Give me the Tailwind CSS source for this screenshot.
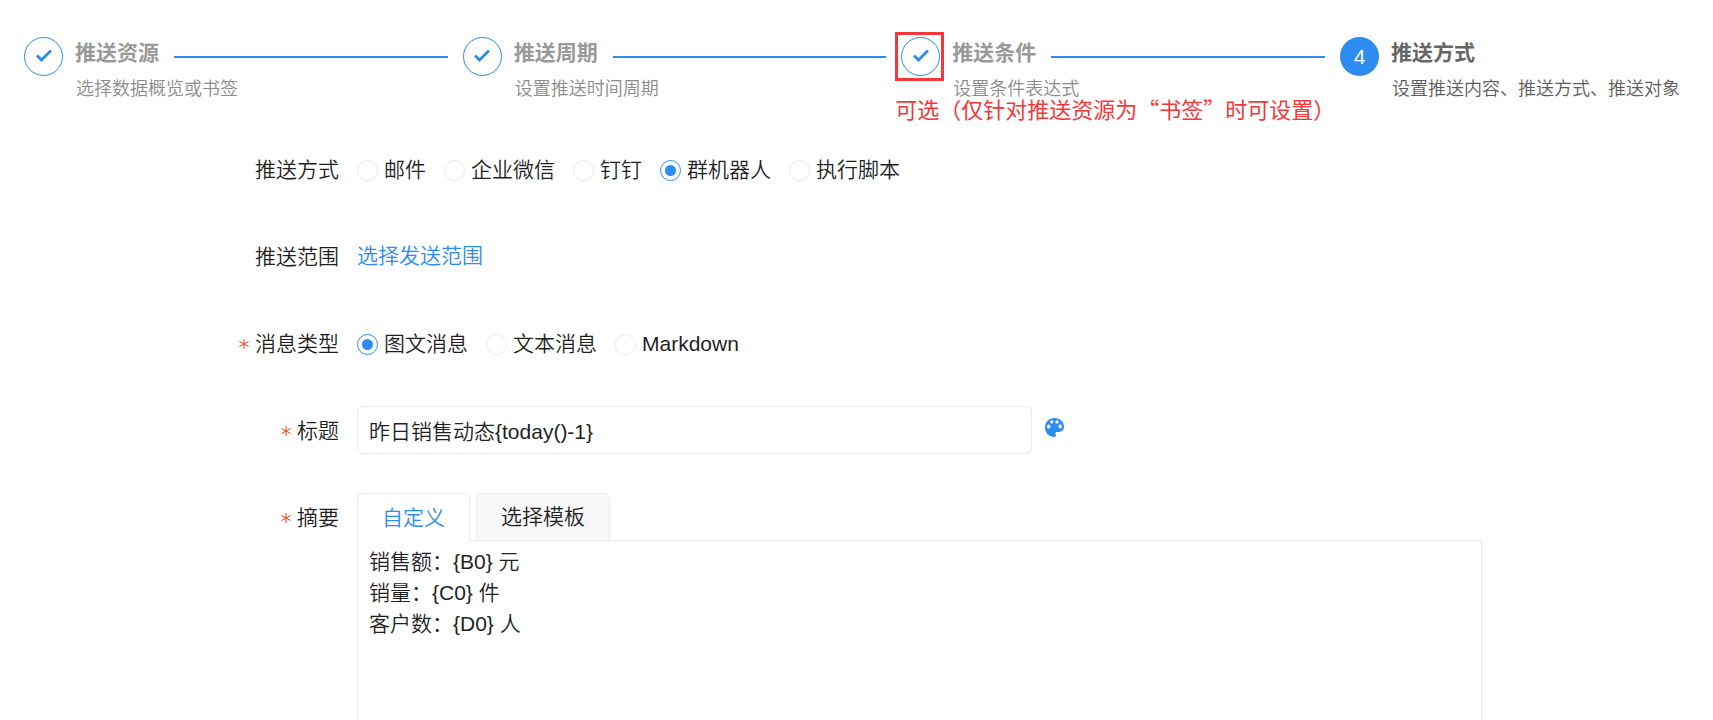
<!DOCTYPE html>
<html lang="zh-CN">
<head>
  <meta charset="UTF-8">
  <meta name="viewport" content="width=device-width, initial-scale=1.0">
  <title>推送方式</title>
  <script src="https://cdn.jsdelivr.net/npm/@tailwindcss/browser@4"></script>
</head>
<body class="flex h-screen flex-col overflow-hidden bg-white font-['Liberation_Sans','Noto_Sans_CJK_SC',sans-serif] text-[21px] font-[350] text-[#1f1f1f]">

  <!-- Steps -->
  <ol class="grid grid-cols-[1fr_1fr_1fr_373px] pl-6 pt-[37px]">
    <li class="flex gap-3">
      <span class="flex size-[39px] shrink-0 items-center justify-center rounded-full border border-[#2d8cf0]">
        <svg class="size-4" viewBox="0 0 16 16" fill="none" stroke="#2d8cf0" stroke-width="2.8"><path d="M1 6.500 5.500 11 15 1.500"/></svg>
      </span>
      <div class="min-w-0 flex-1">
        <div class="flex gap-[15px] pr-[15px]">
          <h2 class="font-bold leading-8 text-[#999]">推送资源</h2>
          <span class="mt-[19px] h-0.5 flex-1 bg-[#2d8cf0]"></span>
        </div>
        <p class="pl-px pt-1.5 text-lg leading-7 text-[#8c8c8c]">选择数据概览或书签</p>
      </div>
    </li>
    <li class="flex gap-3">
      <span class="flex size-[39px] shrink-0 items-center justify-center rounded-full border border-[#2d8cf0]">
        <svg class="size-4" viewBox="0 0 16 16" fill="none" stroke="#2d8cf0" stroke-width="2.8"><path d="M1 6.500 5.500 11 15 1.500"/></svg>
      </span>
      <div class="min-w-0 flex-1">
        <div class="flex gap-[15px] pr-[15px]">
          <h2 class="font-bold leading-8 text-[#999]">推送周期</h2>
          <span class="mt-[19px] h-0.5 flex-1 bg-[#2d8cf0]"></span>
        </div>
        <p class="pl-px pt-1.5 text-lg leading-7 text-[#8c8c8c]">设置推送时间周期</p>
      </div>
    </li>
    <li class="relative flex gap-3">
      <span class="flex size-[39px] shrink-0 items-center justify-center rounded-full border border-[#2d8cf0]">
        <svg class="size-4" viewBox="0 0 16 16" fill="none" stroke="#2d8cf0" stroke-width="2.8"><path d="M1 6.500 5.500 11 15 1.500"/></svg>
      </span>
      <div class="min-w-0 flex-1">
        <div class="flex gap-[15px] pr-[15px]">
          <h2 class="font-bold leading-8 text-[#999]">推送条件</h2>
          <span class="mt-[19px] h-0.5 flex-1 bg-[#2d8cf0]"></span>
        </div>
        <p class="pl-px pt-1.5 text-lg leading-7 text-[#8c8c8c]">设置条件表达式</p>
      </div>
      <!-- Annotation -->
      <span class="absolute -left-1.5 -top-[5px] size-[49px] border-3 border-[#f5373a]"></span>
      <strong class="absolute -left-1.5 top-14 whitespace-nowrap font-['Noto_Sans_CJK_SC',sans-serif] text-[22px] font-normal leading-[30px] text-[#f5373a]">可选（仅针对推送资源为“书签”时可设置）</strong>
    </li>
    <li class="flex gap-3">
      <span class="flex size-[39px] shrink-0 items-center justify-center rounded-full bg-[#2d8cf0] text-white">4</span>
      <div class="min-w-0 flex-1">
        <h2 class="font-bold leading-8 text-[#666]">推送方式</h2>
        <p class="whitespace-nowrap pl-px pt-1.5 text-lg leading-7 text-[#5c5c5c]">设置推送内容、推送方式、推送对象</p>
      </div>
    </li>
  </ol>

  <!-- Push form -->
  <form class="mt-[42px] grid min-h-0 flex-1 grid-cols-[339px_1fr] grid-rows-[48px_48px_48px_48px_1fr] gap-x-[18px] gap-y-[39px] overflow-hidden pr-[231px] leading-8">
    <div class="flex h-12 items-center justify-end pt-0.5" id="way-label">推送方式</div>
    <div class="flex items-center gap-[18px] pt-0.5" role="radiogroup" aria-labelledby="way-label">
      <label class="flex items-center gap-1.5"><input type="radio" name="way" class="size-[21px] appearance-none rounded-full border border-[#e8eaec] p-1 checked:border-[#2d8cf0] checked:bg-[#2d8cf0] checked:bg-clip-content">邮件</label>
      <label class="flex items-center gap-1.5"><input type="radio" name="way" class="size-[21px] appearance-none rounded-full border border-[#e8eaec] p-1 checked:border-[#2d8cf0] checked:bg-[#2d8cf0] checked:bg-clip-content">企业微信</label>
      <label class="flex items-center gap-1.5"><input type="radio" name="way" class="size-[21px] appearance-none rounded-full border border-[#e8eaec] p-1 checked:border-[#2d8cf0] checked:bg-[#2d8cf0] checked:bg-clip-content">钉钉</label>
      <label class="flex items-center gap-1.5"><input type="radio" name="way" checked class="size-[21px] appearance-none rounded-full border border-[#e8eaec] p-1 checked:border-[#2d8cf0] checked:bg-[#2d8cf0] checked:bg-clip-content">群机器人</label>
      <label class="flex items-center gap-1.5"><input type="radio" name="way" class="size-[21px] appearance-none rounded-full border border-[#e8eaec] p-1 checked:border-[#2d8cf0] checked:bg-[#2d8cf0] checked:bg-clip-content">执行脚本</label>
    </div>

    <div class="flex h-12 items-center justify-end pt-0.5">推送范围</div>
    <div class="flex items-center"><a href="#" class="text-[#2d8cf0]">选择发送范围</a></div>

    <div class="flex h-12 items-center justify-end gap-1.5 pt-0.5" id="type-label">
      <svg class="size-2.5" viewBox="0 0 10 10" stroke="#ed4014" stroke-width="1"><path d="M5 0V10M.5 2.5 9.5 7.5M9.5 2.5 .5 7.5"/></svg>消息类型
    </div>
    <div class="flex items-center gap-[18px] pt-0.5" role="radiogroup" aria-labelledby="type-label">
      <label class="flex items-center gap-1.5"><input type="radio" name="type" checked class="size-[21px] appearance-none rounded-full border border-[#e8eaec] p-1 checked:border-[#2d8cf0] checked:bg-[#2d8cf0] checked:bg-clip-content">图文消息</label>
      <label class="flex items-center gap-1.5"><input type="radio" name="type" class="size-[21px] appearance-none rounded-full border border-[#e8eaec] p-1 checked:border-[#2d8cf0] checked:bg-[#2d8cf0] checked:bg-clip-content">文本消息</label>
      <label class="flex items-center gap-1.5"><input type="radio" name="type" class="size-[21px] appearance-none rounded-full border border-[#e8eaec] p-1 checked:border-[#2d8cf0] checked:bg-[#2d8cf0] checked:bg-clip-content">Markdown</label>
    </div>

    <label for="title" class="flex h-12 items-center justify-end gap-1.5 pt-0.5">
      <svg class="size-2.5" viewBox="0 0 10 10" stroke="#ed4014" stroke-width="1"><path d="M5 0V10M.5 2.5 9.5 7.5M9.5 2.5 .5 7.5"/></svg>标题
    </label>
    <div class="flex items-center gap-3">
      <input id="title" type="text" value="昨日销售动态{today()-1}" class="h-12 w-3/5 rounded-md border border-[#e8eaec] px-[11px] outline-none">
      <button type="button" aria-label="颜色" class="pb-1.5">
        <svg class="size-[21px]" viewBox="0 0 21 21"><path fill="#2d8cf0" d="M10.500 1C5 1 1 5 1 10.500S5 20 10.500 20C11.600 20 12 19.200 12 18.500C12 17.500 11.300 17.400 11.300 16.400C11.300 15.500 12 14.900 13 14.900H15C18 14.900 20 12.700 20 9.800C20 4.800 15.800 1 10.500 1Z"/><g fill="#fff"><ellipse cx="4.700" cy="9.500" rx="1.700" ry="1.900"/><ellipse cx="7.800" cy="4.900" rx="1.600" ry="1.700"/><ellipse cx="13" cy="4.900" rx="1.600" ry="1.700"/><ellipse cx="16.200" cy="9.500" rx="1.700" ry="1.900"/></g></svg>
      </button>
    </div>

    <label for="summary" class="flex h-12 items-center justify-end gap-1.5 pt-0.5">
      <svg class="size-2.5" viewBox="0 0 10 10" stroke="#ed4014" stroke-width="1"><path d="M5 0V10M.5 2.5 9.5 7.5M9.5 2.5 .5 7.5"/></svg>摘要
    </label>
    <div>
      <div class="flex gap-1.5" role="tablist">
        <button type="button" role="tab" aria-selected="true" class="relative z-10 -mb-px h-12 rounded-t-md border border-b-0 border-[#e8eaec] bg-white px-6 text-[#2d8cf0]">自定义</button>
        <button type="button" role="tab" aria-selected="false" class="h-[46px] rounded-t-md border border-b-0 border-[#e8eaec] bg-[#f7f7f7] px-6">选择模板</button>
      </div>
      <textarea id="summary" class="block h-64 w-full resize-none border border-[#e8eaec] px-[11px] py-[5px] leading-[31px] outline-none">销售额：{B0} 元
销量：{C0} 件
客户数：{D0} 人</textarea>
    </div>
  </form>

</body>
</html>
